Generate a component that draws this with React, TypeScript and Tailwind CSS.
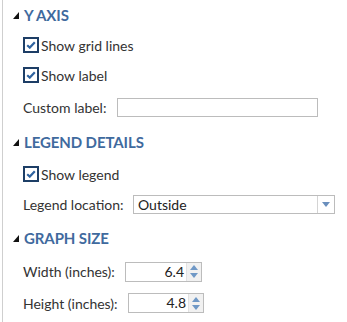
import React from "react";

function Triangle() {
  return (
    <svg width="6" height="7" viewBox="0 0 6 7" className="shrink-0">
      <polygon points="6,0 6,7 0,7" fill="#111" />
    </svg>
  );
}

function SectionHeader({ title, className }: { title: string; className: string }) {
  return (
    <div className={`flex items-center gap-[5px] pl-[10px] ${className}`}>
      <Triangle />
      <span className="text-[15px] font-bold text-[#3f6a9e] tracking-[-0.1px]">{title}</span>
    </div>
  );
}

function Check({ label, className }: { label: string; className: string }) {
  return (
    <div className={`flex items-center pl-[20px] ${className}`}>
      <span className="w-[16px] h-[16px] border-2 border-[#1d3e66] bg-white flex items-center justify-center">
        <svg width="10" height="8" viewBox="0 0 10 8">
          <path d="M1.2 4.2 L3.8 6.6 L8.8 1.2" stroke="#2f63a0" strokeWidth="2.2" fill="none" />
        </svg>
      </span>
      <span className="ml-[2px] text-[14px] text-[#333]">{label}</span>
    </div>
  );
}

function Spinner({ value, width }: { value: string; width: string }) {
  return (
    <div className={`flex h-[20px] border border-[#bcbcbc] bg-white ${width}`}>
      <span className="flex-1 text-right pr-[2px] text-[14px] leading-[18px] text-[#222]">{value}</span>
      <span className="w-[15px] bg-[#f1f1f1] border-l border-[#e2e2e2] flex flex-col items-center justify-center gap-[3px]">
        <svg width="8" height="5" viewBox="0 0 8 5">
          <polygon points="4,0 8,5 0,5" fill="#6f98c6" />
        </svg>
        <svg width="8" height="5" viewBox="0 0 8 5">
          <polygon points="0,0 8,0 4,5" fill="#6f98c6" />
        </svg>
      </span>
    </div>
  );
}

export default function App() {
  return (
    <div className="w-[347px] h-[322px] bg-white pl-[2px] font-['Lato',sans-serif] overflow-hidden">
      <div className="h-full border-l border-[#cfcfcf]">
        {/* Y axis */}
        <SectionHeader title="Y AXIS" className="h-[30px]" />
        <Check label="Show grid lines" className="h-[30px]" />
        <Check label="Show label" className="h-[30px]" />
        <div className="flex items-center pl-[20px] h-[34px]">
          <span className="w-[94px] text-[14px] text-[#333]">Custom label:</span>
          <div className="w-[201px] h-[19px] border border-[#bcbcbc] bg-white" />
        </div>

        {/* Legend */}
        <SectionHeader title="LEGEND DETAILS" className="h-[36px]" />
        <Check label="Show legend" className="h-[28px]" />
        <div className="flex items-center pl-[20px] h-[32px]">
          <span className="w-[110px] text-[14px] text-[#333]">Legend location:</span>
          <div className="flex w-[202px] h-[19px] border border-[#bcbcbc] bg-white">
            <span className="flex-1 pl-[4px] text-[14px] leading-[17px] text-[#222]">Outside</span>
            <span className="w-[17px] border-l border-[#d4d4d4] flex items-center justify-center">
              <svg width="8" height="5" viewBox="0 0 8 5">
                <polygon points="0,0 8,0 4,5" fill="#6a8fbd" />
              </svg>
            </span>
          </div>
        </div>

        {/* Graph size */}
        <SectionHeader title="GRAPH SIZE" className="h-[36px]" />
        <div className="flex items-center pl-[20px] h-[31px]">
          <span className="w-[102px] text-[14px] text-[#333]">Width (inches):</span>
          <Spinner value="6.4" width="w-[77px]" />
        </div>
        <div className="flex items-center pl-[20px] h-[32px]">
          <span className="w-[105px] text-[14px] text-[#333]">Height (inches):</span>
          <Spinner value="4.8" width="w-[76px]" />
        </div>
      </div>
    </div>
  );
}
